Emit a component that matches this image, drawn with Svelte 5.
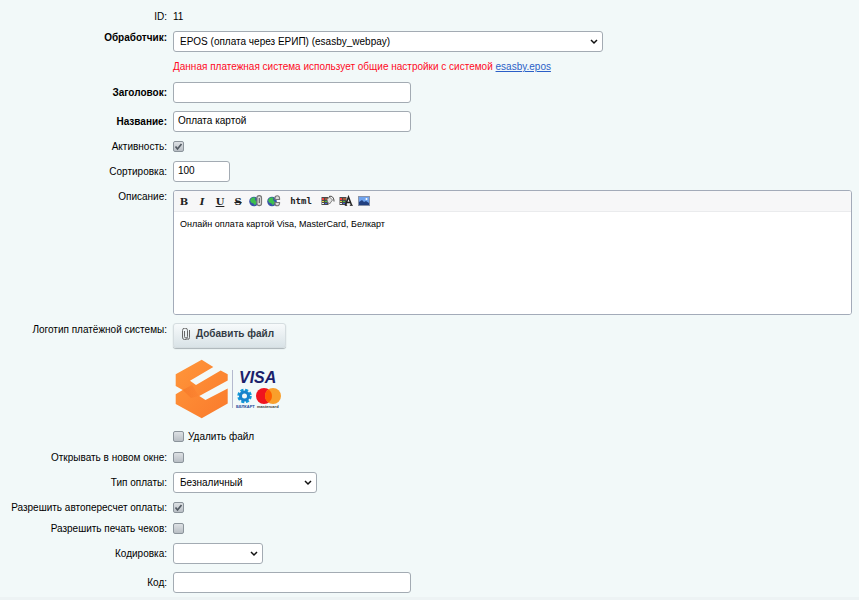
<script>
  let form = $state({
    handler: 'epos',
    title: '',
    name: 'Оплата картой',
    active: true,
    sort: '100',
    removeLogo: false,
    newWindow: false,
    payType: 'cashless',
    allowRecalc: true,
    allowPrint: false,
    encoding: '',
    code: '',
  });
</script>

{#snippet palette()}
  <rect x="0.500" y="2" width="7" height="8" fill="#4a4a4a" />
  <path d="M1 3h2v2H1z" fill="#f04040" /><path d="M4 3h3v2H4z" fill="#a05a3a" />
  <path d="M1 6h2v1H1z" fill="#e8d040" /><path d="M4 6h2v1H4z" fill="#40c040" />
  <path d="M1 8h2v1H1z" fill="#eee" /><path d="M4 8h2v1H4z" fill="#4060e0" />
{/snippet}

<form class="settings">
  <div class="row">
    <span class="label">ID:</span>
    <div class="field">11</div>
  </div>

  <div class="row top">
    <label class="label required" for="handler">Обработчик:</label>
    <div class="field">
      <select id="handler" class="wide" bind:value={form.handler}>
        <option value="epos">EPOS (оплата через ЕРИП) (esasby_webpay)</option>
      </select>
      <p class="warning">
        Данная платежная система использует общие настройки с системой
        <a href="#epos">esasby.epos</a>
      </p>
    </div>
  </div>

  <div class="row">
    <label class="label required" for="title">Заголовок:</label>
    <div class="field"><input id="title" type="text" bind:value={form.title} /></div>
  </div>

  <div class="row">
    <label class="label required" for="name">Название:</label>
    <div class="field"><input id="name" type="text" bind:value={form.name} /></div>
  </div>

  <div class="row">
    <label class="label" for="active">Активность:</label>
    <div class="field"><input id="active" type="checkbox" bind:checked={form.active} /></div>
  </div>

  <div class="row">
    <label class="label" for="sort">Сортировка:</label>
    <div class="field"><input id="sort" class="short" type="text" bind:value={form.sort} /></div>
  </div>

  <div class="row top">
    <label class="label" for="description">Описание:</label>
    <div class="field">
      <div class="editor">
        <div class="toolbar">
          <button type="button"><b>B</b></button>
          <button type="button"><b><i>I</i></b></button>
          <button type="button"><b><u>U</u></b></button>
          <button type="button"><b><s>S</s></b></button>
          {#each ['Ссылка', 'Удалить ссылку'] as title, i}
            <button type="button" {title} aria-label={title}>
              <svg width="14" height="12" viewBox="0 0 14 12">
                <circle cx="5" cy="6.500" r="4.800" fill="#3a52a8" />
                <path d="M1 5 3 2.500 6.500 2.500 6 5 8 7 6 10.500 4.500 8.500 2 7.500Z" fill="#3cc04e" />
                {#if i === 0}
                  <rect x="8" y="0.700" width="4.500" height="10" rx="2.200" fill="#ddd" stroke="#777" stroke-width="1.200" />
                  <path d="M10.300 3v5" stroke="#666" stroke-width="1.200" />
                {:else}
                  <path d="M8 4.500V3a2.200 2.200 0 0 1 4.500 0v1.500zM8 7.500v1a2.200 2.200 0 0 0 4.500 0v-1z" fill="#ddd" stroke="#777" stroke-width="1.200" />
                {/if}
              </svg>
            </button>
          {/each}
          <button type="button" class="html"><b>html</b></button>
          <button type="button" aria-label="Цвет фона">
            <svg width="14" height="12" viewBox="0 0 14 12">
              {@render palette()}
              <path d="M6 4.500 8.500 2l3 3L8.500 9 6.500 7z" fill="#e4e4e4" stroke="#666" stroke-width="0.800" />
              <path d="M8 1.500c3-1 5 1 5 5" fill="none" stroke="#444" />
            </svg>
          </button>
          <button type="button" aria-label="Цвет текста">
            <svg width="14" height="12" viewBox="0 0 14 12">
              {@render palette()}
              <path d="M6.500 10 9.500 2 12.500 10M8 7.500h3" fill="none" stroke="#222" stroke-width="1.500" />
              <path d="M5.800 10.300h2.400M10.800 10.300h3" stroke="#222" />
            </svg>
          </button>
          <button type="button" aria-label="Изображение">
            <svg width="14" height="12" viewBox="0 0 14 12">
              <rect x="1.500" y="1.500" width="11" height="9" fill="#6fa3ee" stroke="#8993a8" />
              <path d="M2 10V7l3-2 2 2 2-1 3 2v2z" fill="#22407f" /><circle cx="9.500" cy="4" r="1" fill="#fff" />
            </svg>
          </button>
        </div>
        <textarea id="description">Онлайн оплата картой Visa, MasterCard, Белкарт</textarea>
      </div>
    </div>
  </div>

  <div class="row top">
    <span class="label">Логотип платёжной системы:</span>
    <div class="field">
      <button type="button" class="upload">
        <svg width="8" height="12" viewBox="0 0 8 12" fill="none" stroke="#666">
          <path d="M2.500 3v5.500a1.500 1.500 0 0 0 3 0V2.500a2 2 0 0 0-5 0V9a2.500 2.500 0 0 0 5 .500M7.500 2v7.500a2 2 0 0 1-2 2" />
        </svg>
        Добавить файл
      </button>
      <svg class="logo" width="110" height="62" viewBox="0 0 110 62" role="img" aria-label="EPOS, Visa, Белкарт, Mastercard">
        <defs>
          <linearGradient id="orange" x1="0" y1="0" x2="1" y2="1">
            <stop offset="0" stop-color="#ff963a" />
            <stop offset="1" stop-color="#fa7a2c" />
          </linearGradient>
          <linearGradient id="fold" x1="0" y1="0" x2="1" y2="0">
            <stop offset="0" stop-color="#ee641c" />
            <stop offset="1" stop-color="#fb8030" />
          </linearGradient>
        </defs>
        <path d="M2.700 16.300 28.700 1.700 40.300 9 17 22.700 23 27 47.700 12.500 54.700 16.300V22.500L26.300 38 32.500 42 54.700 30.500V45.500L28.700 60.300 2.700 46V36.300L9.700 32 2.700 28Z" fill="url(#orange)" />
        <path d="M9.700 32 19 27 26 38 18 40Z" fill="url(#fold)" opacity="0.400" />
        <path d="M59.500 12v38" stroke="#b4b9ce" />
        <text x="66" y="24.500" class="visa">VISA</text>
        <circle cx="71.500" cy="38" r="6" fill="none" stroke="#129ad9" stroke-width="2.500" stroke-dasharray="3 1.700" />
        <circle cx="71.500" cy="38" r="4" fill="none" stroke="#1683cc" stroke-width="3" />
        <circle cx="91" cy="38" r="8" fill="#f0141e" />
        <circle cx="100" cy="38" r="8" fill="#f99f2b" />
        <path d="M95.500 31.400a8 8 0 0 1 0 13.200 8 8 0 0 1 0-13.200" fill="#ff5f00" />
        <text x="63" y="50" class="brand blue">БЕЛКАРТ</text>
        <text x="84" y="50" class="brand">mastercard</text>
      </svg>
      <label class="remove"><input type="checkbox" bind:checked={form.removeLogo} />Удалить файл</label>
    </div>
  </div>

  <div class="row">
    <label class="label" for="new-window">Открывать в новом окне:</label>
    <div class="field"><input id="new-window" type="checkbox" bind:checked={form.newWindow} /></div>
  </div>

  <div class="row">
    <label class="label" for="pay-type">Тип оплаты:</label>
    <div class="field">
      <select id="pay-type" class="medium" bind:value={form.payType}>
        <option value="cashless">Безналичный</option>
      </select>
    </div>
  </div>

  <div class="row">
    <label class="label" for="recalc">Разрешить автопересчет оплаты:</label>
    <div class="field"><input id="recalc" type="checkbox" bind:checked={form.allowRecalc} /></div>
  </div>

  <div class="row">
    <label class="label" for="print">Разрешить печать чеков:</label>
    <div class="field"><input id="print" type="checkbox" bind:checked={form.allowPrint} /></div>
  </div>

  <div class="row">
    <label class="label" for="encoding">Кодировка:</label>
    <div class="field">
      <select id="encoding" class="small" bind:value={form.encoding}>
        <option value=""></option>
      </select>
    </div>
  </div>

  <div class="row">
    <label class="label" for="code">Код:</label>
    <div class="field"><input id="code" type="text" bind:value={form.code} /></div>
  </div>
</form>

<style>
  :global(body) { margin: 0; background: #f2f9f9; }
  .settings {
    padding: 6px 7px 0 0;
    border-bottom: 3px solid #edf3f4;
    font: 10px/13px "Liberation Sans", Arial, sans-serif;
    color: #000;
  }
  .row {
    display: grid;
    grid-template-columns: 167px minmax(0, 1fr);
    column-gap: 6px;
    align-items: center;
    padding: 4px 0;
  }
  .row.top { align-items: start; }
  .label { text-align: right; }
  .required { font-weight: bold; }
  .field { display: flex; flex-direction: column; align-items: flex-start; }
  input, select, textarea, button { box-sizing: border-box; margin: 0; font: inherit; color: inherit; }
  input[type='text'], select {
    height: 21px;
    border: 1px solid #a3abb3;
    border-radius: 3px;
    background-color: #fff;
  }
  input[type='text'] { width: 238px; padding: 0 4px 2px; }
  input[type='text'].short { width: 57px; }
  select {
    appearance: none;
    padding: 0 18px 0 6px;
    background-image: url("data:image/svg+xml,%3Csvg xmlns='http://www.w3.org/2000/svg' width='8' height='6'%3E%3Cpath d='M1 1l3 3 3-3' fill='none' stroke='%23111' stroke-width='1.500'/%3E%3C/svg%3E");
    background-repeat: no-repeat;
    background-position: right 4px center;
  }
  .wide { width: 430px; max-width: 100%; }
  .medium { width: 144px; }
  .small { width: 90px; }
  .warning { margin: 8px 0 1px; color: #ff0a1e; }
  .warning a { color: #2b5fc7; }
  input[type='checkbox'] {
    appearance: none;
    width: 11px;
    height: 11px;
    margin: 1px 0;
    border: 1px solid #8b949b;
    border-radius: 2px;
    background: linear-gradient(#dde1e4, #b9bfc5);
  }
  input[type='checkbox']:checked {
    background: url("data:image/svg+xml,%3Csvg xmlns='http://www.w3.org/2000/svg' width='9' height='9'%3E%3Cpath d='M1.500 4.500l2 2.500 4-5' fill='none' stroke='%23525a62' stroke-width='1.700'/%3E%3C/svg%3E"), linear-gradient(#dde1e4, #b9bfc5);
  }
  .editor {
    box-sizing: border-box;
    width: 100%;
    border: 1px solid #a3abb9;
    border-radius: 3px;
    background: #fff;
    overflow: hidden;
  }
  .toolbar {
    display: flex;
    align-items: center;
    height: 20px;
    padding-left: 1px;
    border-bottom: 1px solid #eaebed;
    background: #f7f7f8;
  }
  .toolbar button {
    display: flex;
    justify-content: center;
    width: 18px;
    padding: 0;
    border: 0;
    background: none;
    font: 10px/13px "DejaVu Serif", serif;
    color: #222;
  }
  .toolbar button.html { width: 36px; font: 9px/13px "DejaVu Sans Mono", monospace; }
  textarea {
    display: block;
    width: 100%;
    height: 102px;
    padding: 6px;
    border: 0;
    resize: none;
    font-size: 9px;
  }
  .upload {
    display: flex;
    align-items: center;
    gap: 6px;
    height: 25px;
    padding: 0 11px 4px 8px;
    border: 1px solid #d5dde0;
    border-radius: 3px;
    background: linear-gradient(#f7fafb, #d9e3e7);
    box-shadow: 0 1px 1px #a9b2b6;
    font-weight: bold;
    color: #333b45;
  }
  .logo { margin: 10px 0; }
  .visa { font: italic bold 16px "Liberation Sans", sans-serif; fill: #1b1f6b; }
  .brand { font: bold 4px "Liberation Sans", sans-serif; fill: #333; }
  .blue { fill: #19489b; }
  .remove { display: flex; align-items: center; gap: 4px; }
</style>
